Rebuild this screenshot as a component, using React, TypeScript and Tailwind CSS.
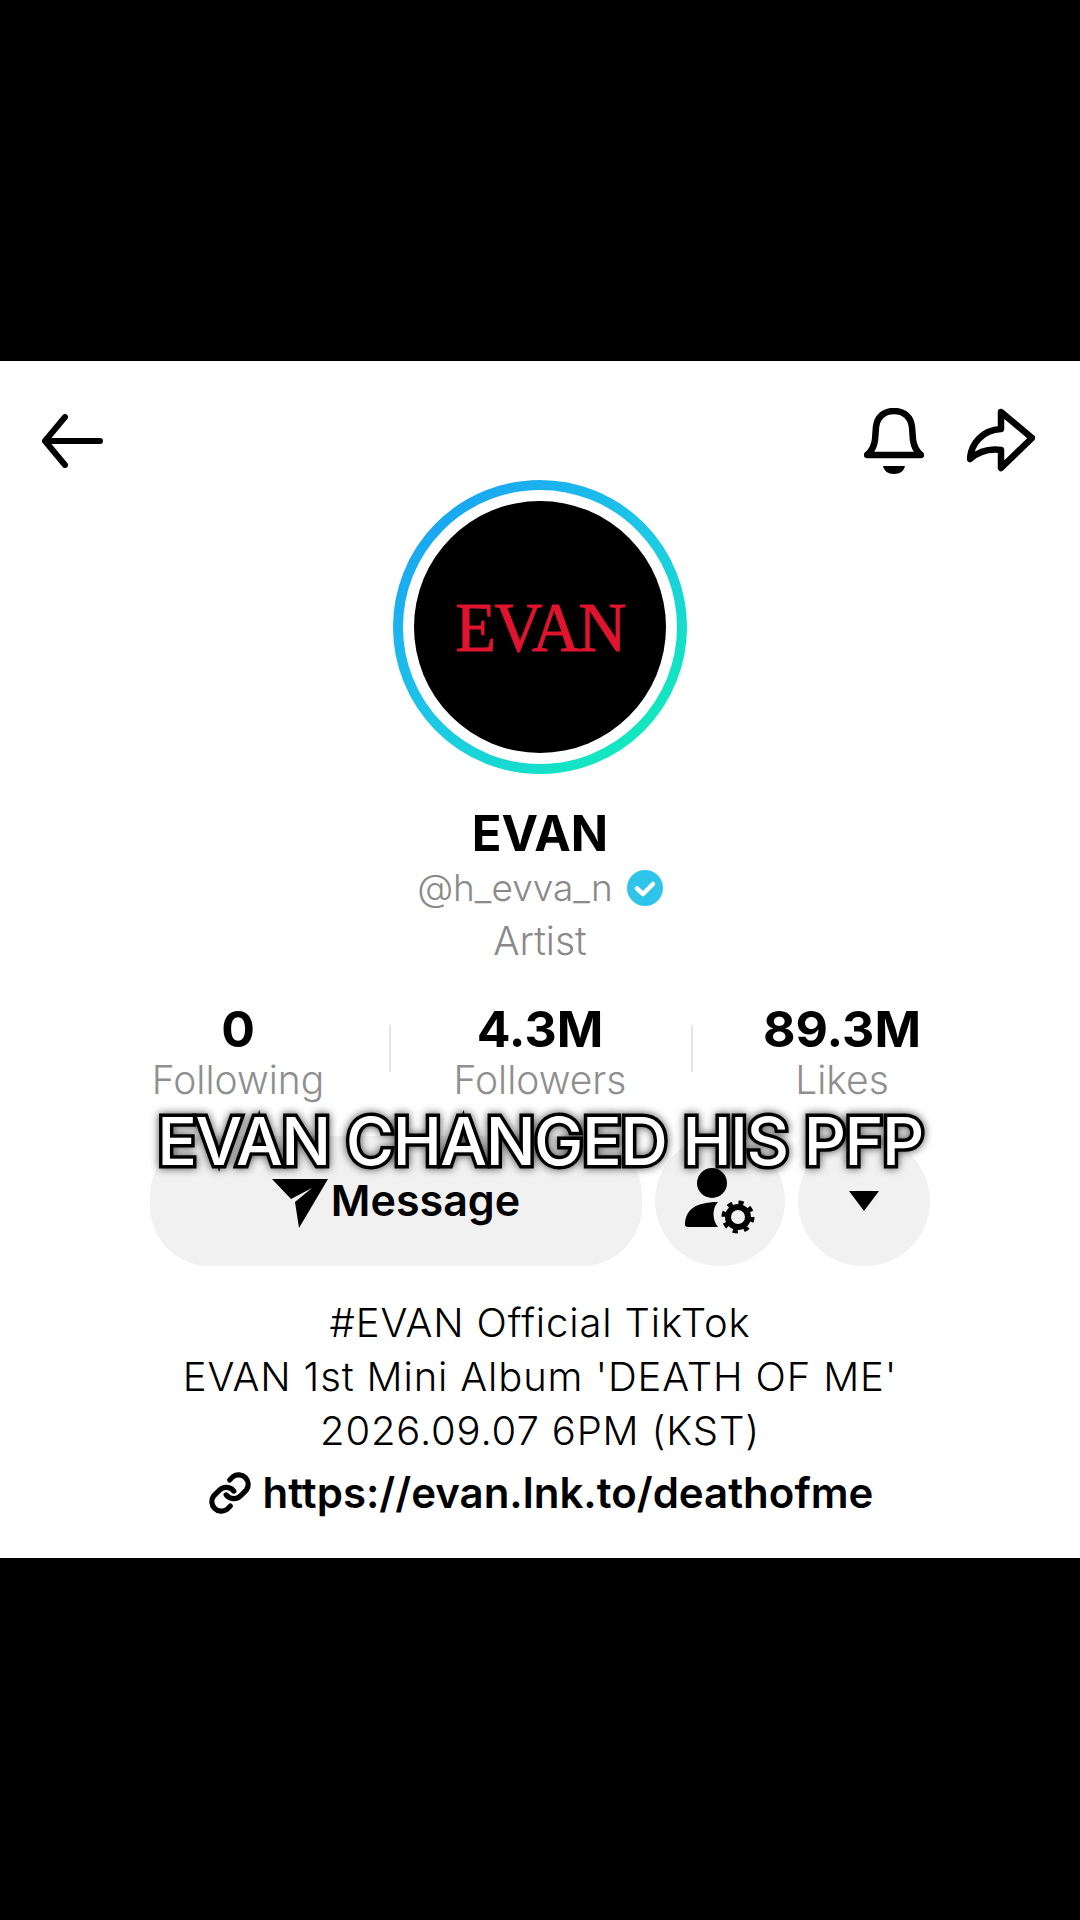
import { useId } from "react";

const stats = [
  { value: "0", label: "Following" },
  { value: "4.3M", label: "Followers" },
  { value: "89.3M", label: "Likes" },
];

function AvatarRing() {
  const id = useId();
  return (
    <svg viewBox="0 0 294 294" className="absolute inset-0 w-full h-full">
      <defs>
        <linearGradient id={id} x1="0.15" y1="0.1" x2="0.85" y2="0.9">
          <stop offset="0" stopColor="#1aa7f2" />
          <stop offset="0.5" stopColor="#1cc8e6" />
          <stop offset="1" stopColor="#12e8bd" />
        </linearGradient>
      </defs>
      <circle cx="147" cy="147" r="142" fill="none" stroke={`url(#${id})`} strokeWidth="10" />
    </svg>
  );
}

export default function App() {
  return (
    <div className="w-[1080px] h-[1920px] bg-black relative overflow-hidden font-['Inter',sans-serif]">
      <div className="h-[361px]" />
      <div className="h-[1197px] bg-white flex flex-col items-center relative">
        {/* Top bar */}
        <div className="w-full h-[119px] pt-[47px] pl-[41px] pr-[45px] flex items-start">
          <svg viewBox="0 0 62 54" className="w-[62px] h-[54px] mt-[6px]" fill="none" stroke="#000" strokeWidth="6" strokeLinecap="round" strokeLinejoin="round">
            <path d="M59 27H4M24 3 4 27l20 24" />
          </svg>
          <div className="ml-auto flex items-start gap-[43px]">
            <svg viewBox="0 0 60 66" className="w-[60px] h-[66px]" fill="none" stroke="#000" strokeWidth="6.5" strokeLinecap="round" strokeLinejoin="round">
              <path d="M3 47h54c-5-4-7-8-8-15l-1-13C47 9 40 3 30 3S13 9 12 19l-1 13c-1 7-3 11-8 15Z" />
              <path d="M19 58h22c-1 5-5 8-11 8s-10-3-11-8Z" fill="#000" stroke="none" />
            </svg>
            <svg viewBox="0 0 68 64" className="w-[68px] h-[64px]" fill="none" stroke="#000" strokeWidth="6.5" strokeLinecap="round" strokeLinejoin="round">
              <path d="M34 4 65 30 34 60V42C20 40 10 45 3 51c1-15 12-29 31-30V4Z" />
            </svg>
          </div>
        </div>

        {/* Avatar */}
        <div className="w-[294px] h-[294px] relative flex items-center justify-center">
          <AvatarRing />
          <div className="w-[252px] h-[252px] rounded-full bg-black flex items-center justify-center">
            <span className="font-['Liberation_Serif',serif] text-[67px] leading-none text-[#e0142e] tracking-[-2px] scale-y-[1.05] [-webkit-text-stroke:0.8px_#e0142e]">EVAN</span>
          </div>
        </div>

        {/* Name */}
        <div className="mt-[34px] text-[49px] leading-[52px] font-bold text-black">EVAN</div>
        <div className="mt-[3px] flex items-center gap-[14px]">
          <span className="text-[37px] leading-[50px] text-[#8a8a8a] font-[350]">@h_evva_n</span>
          <svg viewBox="0 0 36 36" className="w-[36px] h-[36px]">
            <circle cx="18" cy="18" r="18" fill="#2fc4ea" />
            <path d="M10 18.5l6 5.5 10-10" fill="none" stroke="#fff" strokeWidth="4.5" strokeLinecap="round" strokeLinejoin="round" />
          </svg>
        </div>
        <div className="mt-[3px] text-[39px] leading-[50px] text-[#8a8a8a] font-[350]">Artist</div>

        {/* Stats */}
        <div className="mt-[35px] w-[906px] flex">
          {stats.map((s, i) => (
            <div key={s.label} className={`flex-1 flex flex-col items-center ${i > 0 ? "relative" : ""}`}>
              {i > 0 && <div className="absolute left-0 top-[24px] w-[2px] h-[47px] bg-[#e6e6e6]" />}
              <span className="text-[50px] leading-[56px] font-bold text-black">{s.value}</span>
              <span className="mt-[-2px] text-[39px] leading-[50px] text-[#8f8f8f] font-[350]">{s.label}</span>
            </div>
          ))}
        </div>

        {/* Buttons */}
        <div className="mt-[31px] w-[780px] flex gap-[13px]">
          <div className="w-[492px] h-[130px] rounded-[60px] bg-[#f1f1f1] flex items-center justify-center gap-[3px]">
            <svg viewBox="0 0 56 50" className="w-[56px] h-[50px] mt-[4px]">
              <path d="M0 1h56L27 50 23 24 40 10 19 21Z" fill="#000" />
            </svg>
            <span className="mb-[3px] text-[43px] leading-[50px] font-semibold text-black">Message</span>
          </div>
          <div className="w-[130px] h-[130px] rounded-full bg-[#f1f1f1] flex items-center justify-center">
            <svg viewBox="0 0 70 66" className="w-[70px] h-[66px]">
              <circle cx="27" cy="15" r="15" fill="#000" />
              <path d="M0 57c0-14 9-23 33-23-6 6-6 18 0 25H4c-3 0-4-1-4-2Z" fill="#000" />
              <circle cx="53" cy="49" r="10" fill="none" stroke="#000" strokeWidth="6" />
              <circle cx="53" cy="49" r="14" fill="none" stroke="#000" strokeWidth="5" strokeDasharray="5 6" />
            </svg>
          </div>
          <div className="w-[132px] h-[130px] rounded-full bg-[#f1f1f1] flex items-center justify-center">
            <svg viewBox="0 0 30 20" className="w-[30px] h-[20px]">
              <path d="M0 0h30L15 20Z" fill="#000" />
            </svg>
          </div>
        </div>

        {/* Bio */}
        <div className="mt-[30px] text-center text-[40px] leading-[54px] text-black tracking-[0.85px] font-[350]">
          <div>#EVAN Official TikTok</div>
          <div>EVAN 1st Mini Album 'DEATH OF ME'</div>
          <div>2026.09.07 6PM (KST)</div>
        </div>
        <div className="mt-[10px] flex items-center gap-[10px]">
          <svg viewBox="0 0 24 24" className="w-[46px] h-[46px]" fill="none" stroke="#000" strokeWidth="2.7" strokeLinecap="round" strokeLinejoin="round">
            <path d="M10 13a5 5 0 0 0 7.5.5l3-3a5 5 0 0 0-7-7l-1.7 1.7" />
            <path d="M14 11a5 5 0 0 0-7.5-.5l-3 3a5 5 0 0 0 7 7l1.7-1.7" />
          </svg>
          <span className="text-[42px] leading-[50px] font-semibold text-black">https://evan.lnk.to/deathofme</span>
        </div>

        {/* Caption overlay */}
        <div className="absolute left-0 right-0 top-[746px] text-center text-[66px] leading-[68px] font-medium text-white tracking-[-1.5px] [-webkit-text-stroke:7px_#000] [paint-order:stroke_fill] [filter:drop-shadow(0_0_4px_rgba(0,0,0,0.7))]">
          EVAN CHANGED HIS PFP
        </div>
      </div>
    </div>
  );
}
